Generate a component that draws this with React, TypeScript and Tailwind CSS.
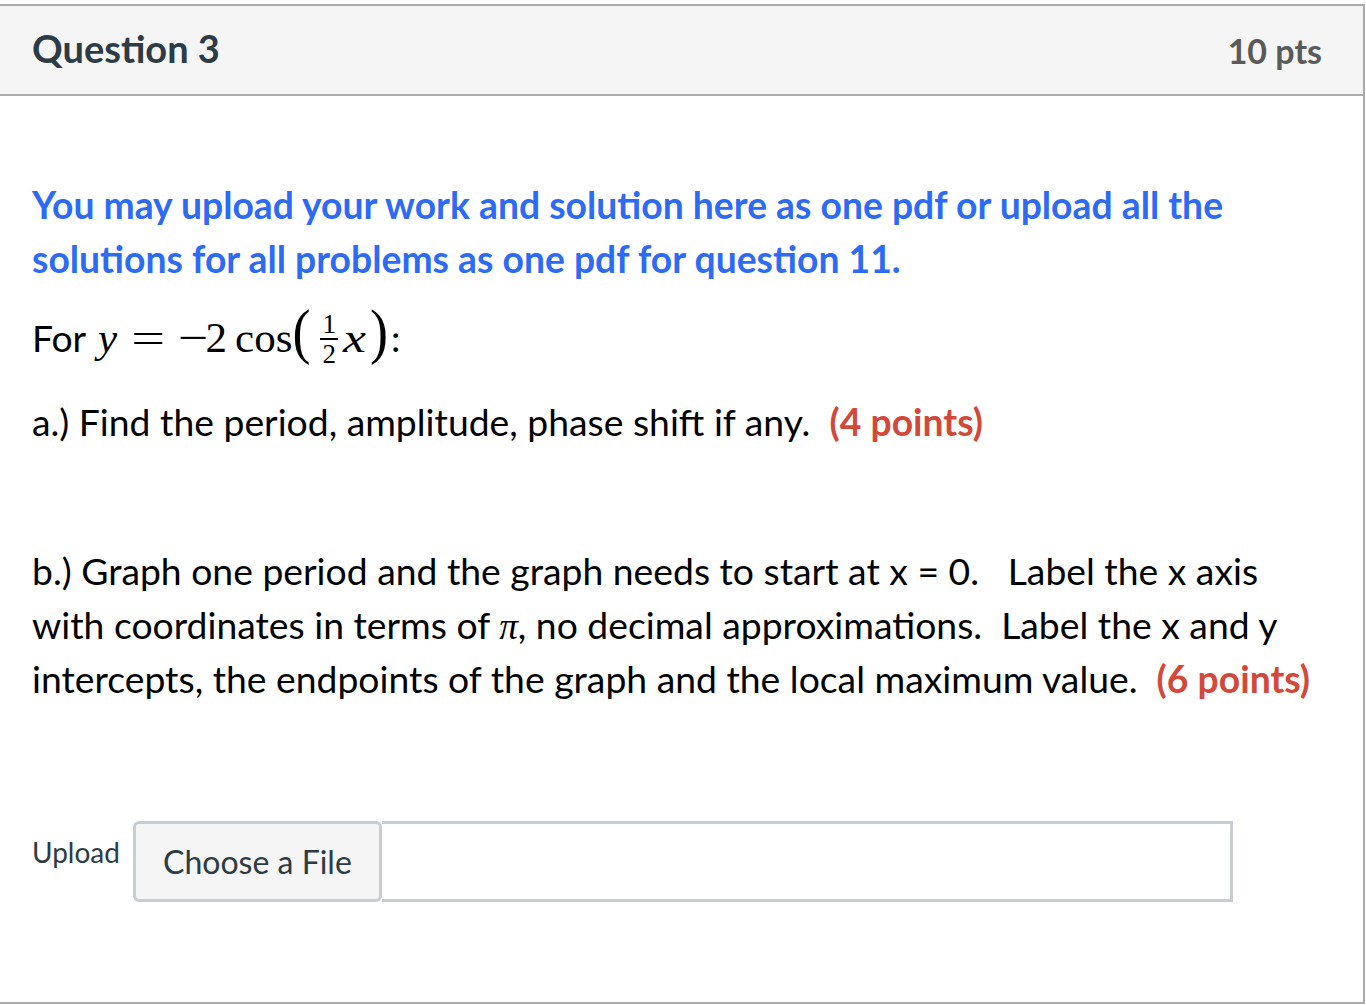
import React from "react";

const lato = { fontFamily: "Lato, 'Open Sans', sans-serif" };

function Frac() {
  return (
    <span className="inline-flex flex-col items-center align-middle ml-[10px] mr-[5px] text-[27px] leading-[22px] -translate-y-[3px]">
      <span className="px-[2px]">1</span>
      <span className="h-[2px] w-full bg-black my-[3px]" />
      <span className="px-[2px]">2</span>
    </span>
  );
}

function MathExpr() {
  return (
    <span className="font-['Liberation_Serif',serif] text-[43px] leading-[40px]">
      <i className="ml-[3px]">y</i>
      <span className="inline-block scale-x-[1.4] ml-[19px] mr-[21px]">=</span>
      <span className="inline-block scale-x-[1.25]">−</span>
      <span>2</span>
      <span className="ml-[8px]">cos</span>
      <span className="inline-block text-[54px] leading-[40px] scale-y-[1.15] -translate-y-[3px]">(</span>
      <Frac />
      <i className="inline-block scale-x-[1.2] mx-[2px]">x</i>
      <span className="inline-block text-[54px] leading-[40px] scale-y-[1.15] -translate-y-[3px] ml-[4px] mr-[3px]">)</span>
    </span>
  );
}

export default function App() {
  return (
    <div className="w-[1366px] h-[1005px] bg-white pt-[4px]" style={lato}>
      <div className="w-[1365px] h-[1000px] border-t-2 border-b-2 border-r-2 border-[#aaaaaa] flex flex-col">
        {/* Header */}
        <div className="h-[90px] bg-[#f5f5f5] border-b-2 border-[#aaaaaa] flex items-center justify-between pl-[32px] pr-[41px]">
          <h2 className="text-[38px] font-bold text-[#2d3b45] -translate-y-[2px]">Question 3</h2>
          <span className="text-[34px] font-bold text-[#5a5a5a]">10 pts</span>
        </div>

        {/* Body */}
        <div className="pl-[32px] pr-[40px] pt-[82px] text-[37.3px] leading-[54px] text-black">
          <p className="font-bold text-[#2d6bf5]">
            You may upload your work and solution here as one pdf or upload all the solutions for all problems as one pdf for question 11.
          </p>
          <p className="mt-[25px] h-[54px]">
            For <MathExpr />:
          </p>
          <p className="mt-[30px]">
            a.) Find the period, amplitude, phase shift if any.&nbsp;{" "}
            <span className="font-bold text-[#d2493a]">(4 points)</span>
          </p>
          <p className="mt-[95px]">
            b.) Graph one period and the graph needs to start at x = 0.&nbsp;&nbsp; Label the x axis with coordinates in terms of{" "}
            <span className="font-['Liberation_Serif',serif] italic leading-none">π</span>, no decimal approximations.&nbsp; Label the x and y intercepts, the endpoints of the graph and the local maximum value.&nbsp;{" "}
            <span className="font-bold text-[#d2493a]">(6 points)</span>
          </p>

          {/* Upload */}
          <div className="mt-[115px] flex items-start">
            <span className="text-[28px] leading-[30px] text-[#2d3b45] mt-[16px] mr-[13px]">Upload</span>
            <div className="flex h-[81px] w-[1100px]">
              <button className="w-[249px] h-full rounded-[6px] border-[3px] border-[#c7cdd1] bg-[#f5f5f5] text-[32px] text-[#2d3b45]">
                Choose a File
              </button>
              <div className="flex-1 h-full border-[3px] border-l-0 border-[#c7cdd1]" />
            </div>
          </div>
        </div>
      </div>
    </div>
  );
}
